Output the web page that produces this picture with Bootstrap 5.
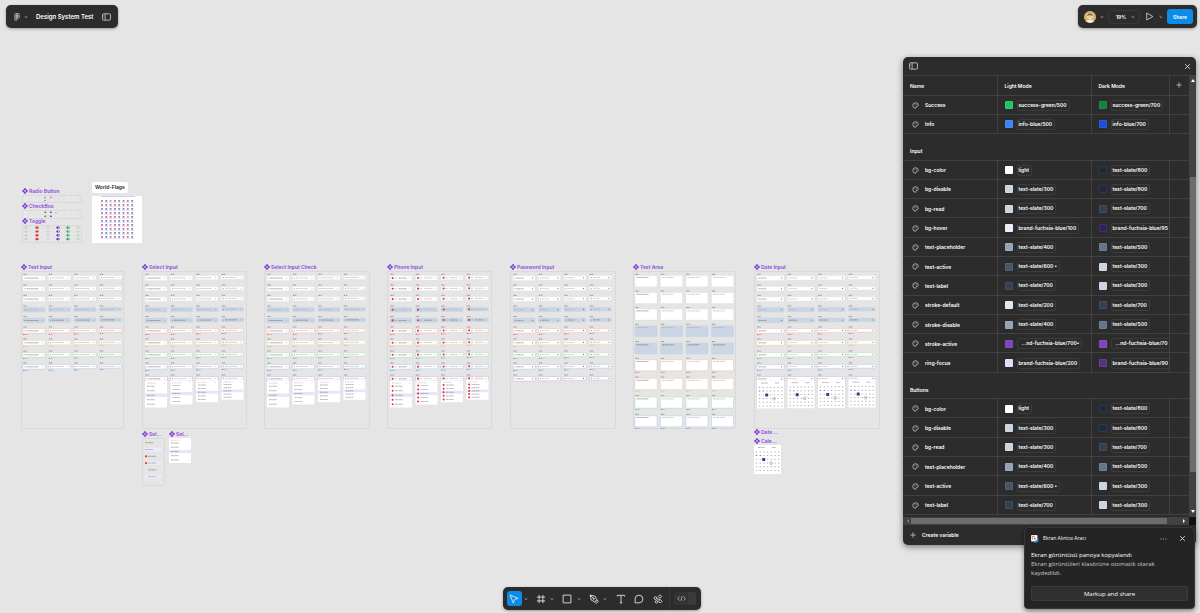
<!DOCTYPE html>
<html lang="en">
<head>
<meta charset="utf-8">
<meta name="viewport" content="width=device-width, initial-scale=1">
<title>Design System Test</title>
<link href="https://cdn.jsdelivr.net/npm/bootstrap@5.3.0/dist/css/bootstrap.min.css" rel="stylesheet">
<style>
  :root { --ui: #2c2c2c; --line: #414141; --purple: #8a4bdb; --accent: #0c8ce9; }
  body { background: #e5e5e5; font-family: Inter, sans-serif; font-size: 5px; line-height: 10px; font-weight: 600; color: #fff; }
  svg { display: block; flex: none; }
  button { font: inherit; color: inherit; background: none; border: 0; padding: 0; }
  .workspace { min-height: 100vh; }
  .floating { background: var(--ui); border-radius: 5px; box-shadow: 0 1px 3px #0005; }
  .topbar { padding: 5px 3px 0 6px; z-index: 2; }
  .topbar .floating { height: 23px; }
  .file-bar { padding: 0 7px 0 8px; width: 112px; }
  .file-name { font-weight: 600; font-size: 6px; margin: 0 auto 0 8px; }
  .user-bar { width: 119px; padding: 0 4px 0 6px; }
  .avatar { width: 12px; height: 12px; }
  .zoom-level { width: 32px; height: 14px; border: 1px solid #383838; border-radius: 3px; margin-left: 4px; padding: 0 4px 0 7px; }
  .present { gap: 5px; }
  .share { background: var(--accent); border-radius: 3px; width: 26px; height: 15px; }

  .art { position: absolute; margin: 0; }
  .art figcaption { position: absolute; left: 0; bottom: 100%; color: var(--purple); white-space: nowrap; display: flex; align-items: center; gap: 1px; line-height: 8px; }
  .art .chip { background: #fff; color: #222; border-radius: 2px; padding: 1px 3px; margin-bottom: 3px; line-height: 9px; }

  .variables { position: absolute; top: 57px; right: 4px; width: 293px; box-shadow: 0 2px 6px #0007; overflow: hidden; }
  .variables-head { height: 18px; padding: 0 5px 0 6px; }
  .grid-area { height: 442px; overflow: hidden; border-top: 1px solid var(--line); }
  .var-table { table-layout: fixed; width: 286px; height: 439px; border-collapse: collapse; }
  .var-table th, .var-table td { height: 19px; padding: 1px 0 0 7px; border-bottom: 1px solid var(--line); border-right: 1px solid var(--line); overflow: hidden; white-space: nowrap; vertical-align: middle; font-weight: 600; }
  .var-table tr > :last-child { border-right: 0; }
  .var-table .group-row th { height: 26px; padding-top: 9px; }
  .var-name { gap: 6px; padding-left: 2px; }
  .swatch { width: 8px; height: 8px; border-radius: 1px; border: 1px solid #ffffff12; flex: none; }
  .alias { border: 1px solid #3b3b3b; border-radius: 2px; line-height: 9px; padding: 0 2px 0 1px; margin-left: 4px; }
  .alias.cut { padding-left: 4px; }
  .vbar { width: 7px; background: #424242; padding: 4px 1px; }
  .vthumb { position: absolute; left: 1px; right: 0; top: 102px; height: 295px; background: #6c6c6c; }
  .hbar { height: 8px; background: #424242; }
  .hthumb { height: 6px; width: 256px; background: #6c6c6c; margin-left: 2px; }
  .corner { width: 7px; height: 8px; background: #111; }
  .create { height: 20px; padding-left: 7px; gap: 6px; }

  .notice { position: absolute; right: 5px; bottom: 4px; width: 171px; height: 82px; padding: 6px 6px 7px; background: #242424; border: 1px solid #363636; border-radius: 4px; box-shadow: 0 2px 5px #0007; font-family: "Open Sans", "Noto Sans", sans-serif; font-weight: 400; font-size: 6px; line-height: 9px; z-index: 3; }
  .notice-title { font-size: 5px; font-weight: 500; }
  .notice-icons { gap: 12px; padding-right: 2px; }
  .notice-text { margin: 8px 24px 0 0; color: #c8c8c8; }
  .notice-text strong { display: block; font-weight: 400; color: #fff; }
  .notice .markup { height: 15px; background: #303030; border: 1px solid #3b3b3b; border-radius: 2px; line-height: 12px; }

  .toolbar-wrap { position: absolute; left: 4px; right: 0; bottom: 3px; z-index: 2; pointer-events: none; }
  .tools { height: 23px; width: 198px; padding: 0 5px 0 4px; pointer-events: auto; }
  .tool { height: 15px; width: 15px; display: flex; align-items: center; justify-content: center; }
  .tool.current { background: var(--accent); border-radius: 3px; }
  .more { width: 8px; margin: 0 4px 0 0; display: flex; justify-content: center; }
  .dev { width: 22px; height: 13px; border-radius: 3px; background: linear-gradient(90deg, #333 65%, #3a3a3a 65%); padding-left: 3px; margin-left: 4px; display: flex; align-items: center; }
  .split { width: 1px; height: 23px; background: #383838; }
</style>
</head>
<body>
<svg class="d-none" aria-hidden="true">
  <symbol id="i-caret" viewBox="0 0 4 4"><path d="M.7 1.4 2 2.6 3.3 1.4" fill="none" stroke="#ccc" stroke-width=".7"/></symbol>
  <symbol id="i-panel" viewBox="0 0 8 7"><rect x=".5" y=".7" width="7" height="5.6" rx=".8" fill="none" stroke="#ddd" stroke-width=".7"/><path d="M2.8 .7v5.6M1.5 2.2h.5M1.5 3.4h.5" stroke="#ddd" stroke-width=".6"/></symbol>
  <symbol id="i-close" viewBox="0 0 6 6"><path d="m1 1 4 4m0-4L1 5" stroke="#eee" stroke-width=".7"/></symbol>
  <symbol id="i-plus" viewBox="0 0 6 6"><path d="M3 .4v5.2M.4 3h5.2" stroke="#ddd" stroke-width=".7"/></symbol>
  <symbol id="i-palette" viewBox="0 0 8 8"><path d="M4 .8A3.2 3.2 0 1 0 4.2 7.2C4.8 7 4.3 6 4.6 5.4 5 4.8 7.2 5.3 7.2 4A3.2 3.2 0 0 0 4 .8Z" fill="none" stroke="#ddd" stroke-width=".75"/><path d="M2.4 3.3h.6M3.7 2.3h.6M5.1 3h.6" stroke="#ddd" stroke-width=".7"/></symbol>
  <symbol id="i-comp" viewBox="0 0 6 6"><path d="M3 0 4.3 1.3 3 2.6 1.7 1.3ZM3 3.4 4.3 4.7 3 6 1.7 4.7ZM0 3 1.3 1.7 2.6 3 1.3 4.3ZM3.4 3 4.7 1.7 6 3 4.7 4.3Z" fill="#7a35d6" stroke="#7a35d6" stroke-width=".2"/></symbol>
</svg>

<div class="workspace position-relative overflow-hidden">
  <header class="topbar position-relative d-flex justify-content-between">
    <div class="floating file-bar d-flex align-items-center">
      <button aria-label="Main menu" class="d-flex align-items-center gap-1">
        <svg width="6" height="8" viewBox="0 0 6 8" fill="none" stroke="#ddd" stroke-width=".6"><path d="M3 .5H1.7a1.2 1.2 0 0 0 0 2.4H3ZM3 .5h1.3a1.2 1.2 0 0 1 0 2.4H3ZM3 2.9H1.7a1.2 1.2 0 0 0 0 2.4H3Z"/><circle cx="4.3" cy="4.1" r="1.2"/><path d="M3 5.3H1.7A1.2 1.2 0 1 0 3 6.5Z"/></svg>
        <svg width="4" height="4"><use href="#i-caret"/></svg>
      </button>
      <h1 class="file-name lh-1">Design System Test</h1>
      <button aria-label="Toggle sidebar"><svg width="9" height="8"><use href="#i-panel"/></svg></button>
    </div>
    <div class="floating user-bar d-flex align-items-center">
      <button class="d-flex align-items-center gap-1" aria-label="Account">
        <svg class="avatar" viewBox="0 0 12 12"><circle cx="6" cy="6" r="6" fill="#d9b36a"/><circle cx="6" cy="5.3" r="3" fill="#f0dfb8"/><path d="M3.5 4.5C4 2 8 2 8.5 4.5 7 3.8 5 3.8 3.5 4.5ZM4.5 6h1M6.5 6h1" fill="#8a6a35" stroke="#6b5230" stroke-width=".5"/><path d="M2.5 10.5C3 8 9 8 9.5 10.5A6 6 0 0 1 2.5 10.5Z" fill="#f7f0e2"/></svg>
        <svg width="4" height="4"><use href="#i-caret"/></svg>
      </button>
      <button class="zoom-level d-flex align-items-center justify-content-between">19% <svg width="4" height="4"><use href="#i-caret"/></svg></button>
      <button class="present d-flex align-items-center ms-auto me-1" aria-label="Present">
        <svg width="9" height="9" viewBox="0 0 8 8"><path d="M1.5 .9 7 4 1.5 7.1Z" fill="none" stroke="#ddd" stroke-width=".7" stroke-linejoin="round"/></svg>
        <svg width="4" height="4"><use href="#i-caret"/></svg>
      </button>
      <button class="share">Share</button>
    </div>
  </header>

  <main id="board" aria-label="Canvas"></main>

  <section class="variables floating" aria-label="Variables">
    <div class="variables-head d-flex align-items-center justify-content-between">
      <button aria-label="Show collections"><svg width="9" height="8"><use href="#i-panel"/></svg></button>
      <button aria-label="Close"><svg width="7" height="7"><use href="#i-close"/></svg></button>
    </div>
    <div class="d-flex">
      <div class="grid-area flex-grow-1">
        <table class="var-table">
          <colgroup><col width="94"><col width="94"><col width="78"><col width="20"></colgroup>
          <thead><tr><th scope="col">Name</th><th scope="col">Light Mode</th><th scope="col">Dark Mode</th><th scope="col" class="p-0"><button class="d-block mx-auto" aria-label="New mode"><svg width="6" height="6"><use href="#i-plus"/></svg></button></th></tr></thead>
          <tbody id="vars"></tbody>
        </table>
      </div>
      <div class="vbar position-relative d-flex flex-column justify-content-between align-items-center">
        <svg width="4" height="3" viewBox="0 0 4 3"><path d="M0 3 2 0 4 3Z" fill="#fff"/></svg>
        <div class="vthumb"></div>
        <svg width="4" height="3" viewBox="0 0 4 3"><path d="M0 0 2 3 4 0Z" fill="#fff"/></svg>
      </div>
    </div>
    <div class="d-flex">
      <div class="hbar flex-grow-1 d-flex align-items-center justify-content-between">
        <svg class="ms-1" width="2" height="4" viewBox="0 0 2 4"><path d="M2 0 0 2 2 4Z" fill="#888"/></svg>
        <div class="hthumb me-auto"></div>
        <svg class="me-1" width="2" height="4" viewBox="0 0 2 4"><path d="M0 0 2 2 0 4Z" fill="#fff"/></svg>
      </div>
      <div class="corner"></div>
    </div>
    <button class="create d-flex align-items-center"><svg width="6" height="6"><use href="#i-plus"/></svg>Create variable</button>
  </section>

  <aside class="notice d-flex flex-column" aria-label="Notification" lang="tr">
    <div class="d-flex align-items-center">
      <svg width="8" height="8" viewBox="0 0 8 8"><rect x="0" y="0" width="6.5" height="6.5" rx="1" fill="#f4f4f4"/><path d="M1.3 4.500V1.300H4" fill="none" stroke="#c94b32" stroke-width=".7"/><path d="M2.500 7.500 7.500 3.500V6L6 7.500Z" fill="#2f8fe0"/><circle cx="3.800" cy="3.600" r=".9" fill="#d2694c"/></svg>
      <span class="notice-title ms-1">Ekran Alıntısı Aracı</span>
      <div class="notice-icons d-flex align-items-center ms-auto">
        <button aria-label="Options"><svg width="7" height="6" viewBox="0 0 7 6"><path d="M.5 3h1M3 3h1M5.5 3h1" stroke="#ddd" stroke-width=".8"/></svg></button>
        <button aria-label="Dismiss"><svg width="7" height="7"><use href="#i-close"/></svg></button>
      </div>
    </div>
    <p class="notice-text"><strong>Ekran görüntüsü panoya kopyalandı</strong>Ekran görüntüleri klasörüne otomatik olarak kaydedildi.</p>
    <button class="markup mt-auto">Markup and share</button>
  </aside>

  <div class="toolbar-wrap d-flex justify-content-center">
    <nav class="floating tools d-flex align-items-center" aria-label="Tools" id="tools"></nav>
  </div>
</div>

<script>
  const caret = '<svg width="4" height="4"><use href="#i-caret"/></svg>';
  const toolIcons = [
    ['Move', '<path d="M1 1 8.2 3.9 5 5 3.9 8.2Z"/>', true],
    ['Frame', '<path d="M2.8 .8v7.4M6.2 .8v7.4M.8 2.8h7.4M.8 6.2h7.4"/>', true],
    ['Rectangle', '<rect x="1" y="1" width="7" height="7"/>', true],
    ['Pen', '<path d="M1 1 5.5 2 7 5 5 7 2 5.5ZM1 1 4 4M5.5 7.5 7.5 5.5 8.5 6.5 6.5 8.5Z"/><circle cx="4.3" cy="4.3" r=".6"/>', true],
    ['Text', '<path d="M1.2 2.3V1.2h6.6v1.1M4.5 1.2v6.8M3.4 8h2.2"/>', false],
    ['Comment', '<path d="M1 8V4.5A3.5 3.5 0 1 1 4.5 8Z"/>', false],
    ['Actions', '<path d="M6.3 .7 7.9 2.3 6.3 3.9 4.7 2.3ZM6.5 4.9 8.1 6.5 6.5 8.1 4.9 6.5Z"/><circle cx="2.2" cy="3.7" r="1.2"/><circle cx="3.1" cy="7" r="1.1"/><path d="M3.400 4.300 6 5"/>', false]
  ];
  tools.innerHTML = toolIcons.map(([name, path, more], i) =>
    `<button class="tool ${i ? '' : 'current'}" aria-label="${name}"><svg width="10" height="10" viewBox="0 0 9 9" fill="none" stroke="#eee" stroke-width=".75" stroke-linejoin="round">${path}</svg></button>` +
    (more ? `<button class="more" aria-label="${name} options">${caret}</button>` : '<span class="ps-1"></span>')).join('') +
    `<span class="split ms-auto"></span><button class="dev" aria-label="Dev mode"><svg width="9" height="7" viewBox="0 0 9 7"><path d="M2.5 1.5.7 3.5l1.8 2M6.5 1.5l1.8 2-1.8 2M5.2 1.2 3.8 5.8" fill="none" stroke="#ccc" stroke-width=".7"/></svg></button>`;

  const s = n => 'text-slate/' + n, b = n => 'brand-fuchsia-blue/' + n;
  const base = [
    ['bg-color', 'light', '#ffffff', s(800), '#1e293b'],
    ['bg-disable', s(300), '#cbd5e1', s(800), '#1e293b'],
    ['bg-read', s(300), '#cbd5e1', s(700), '#334155']];
  const mid = [
    ['text-placeholder', s(400), '#94a3b8', s(500), '#64748b'],
    ['text-active', s(600) + ' •', '#475569', s(300), '#cbd5e1'],
    ['text-label', s(700), '#334155', s(300), '#cbd5e1']];
  const rows = [
    ['Success', 'success-green/500', '#22c55e', 'success-green/700', '#15803d'],
    ['Info', 'info-blue/500', '#3b82f6', 'info-blue/700', '#1d4ed8'],
    'Input', ...base,
    ['bg-hover', b(100), '#f0eafc', b(95), '#35205c'], ...mid,
    ['stroke-default', s(200), '#e2e8f0', s(700), '#334155'],
    ['stroke-disable', s(400), '#94a3b8', s(500), '#64748b'],
    ['stroke-active', '...nd-fuchsia-blue/700•', '#7e45b8', '...nd-fuchsia-blue/70', '#7e45b8'],
    ['ring-focus', b(200), '#e2dcfa', b(90), '#56337e'],
    'Buttons', ...base, ...mid];
  const value = (t, c) => `<td><div class="d-flex align-items-center"><span class="swatch" style="background:${c}"></span><span class="alias ${t[0] === '.' ? 'cut' : ''}">${t}</span></div></td>`;
  vars.innerHTML = rows.map(r => typeof r === 'string'
    ? `<tr class="group-row"><th colspan="4" scope="rowgroup">${r}</th></tr>`
    : `<tr><th scope="row"><div class="var-name d-flex align-items-center"><svg width="7" height="7"><use href="#i-palette"/></svg>${r[0]}</div></th>${value(r[1], r[2])}${value(r[3], r[4])}<td></td></tr>`).join('');

  /* Component sheets on the canvas */
  const rect = (x, y, w, h, f, st = 'none', r = .5) => `<rect x="${x}" y="${y}" width="${w}" height="${h}" rx="${r}" fill="${f}" stroke="${st}" stroke-width=".35"/>`;
  const words = (x, y, w, c = '#777', o = .8) => `<path d="M${x} ${y}h${w}" stroke="${c}" stroke-width=".7" stroke-dasharray="2 .3 1.4 .4" opacity="${o * .85}"/>`;
  const dot = (x, y, r, c) => `<circle cx="${x}" cy="${y}" r="${r}" fill="${c}"/>`;
  const border = (w, h) => `<rect x=".5" y=".5" width="${w - 1}" height="${h - 1}" rx="1" fill="none" stroke="#c9c5cf" stroke-width=".6" stroke-dasharray="1 .5"/>`;
  const states = ['#e3e6ea', '#d5d8dd', '#d5d8dd', 'dis', 'read', '#f0a5a5', '#f0cf98', '#8fd6ab', '#94b6ef', '#b79ad6'];
  const status = ['#e02f2f', '#e8a13a', '#22a35a', '#3772dd'];

  function menu(x, y, h, phone) {
    let o = rect(x, y, 22, h, '#fff') + words(x + 2, y + 2.2, 9, '#999', .6) + dot(x + 19.5, y + 2, .4, '#999');
    const step = (h - 4) / 5;
    o += rect(x, y + 3.4 + step * 2, 22, step * .8, '#eae4fa', 'none', 0);
    for (let i = 0; i < 5; i++) {
      const yy = y + 3.4 + step * (i + .4);
      if (phone) o += dot(x + 2.6, yy, 1, '#d9304c');
      o += words(x + (phone ? 5 : 2), yy, 8, '#666', .8);
    }
    return o;
  }
  function calendar(x, y, w = 27, h = 28) {
    let o = rect(x, y, w, h, '#fff') + words(x + 4, y + 2.5, 7, '#666') + words(x + 18, y + 2.5, 4, '#666');
    for (let r = 0; r < 6; r++) for (let c = 0; c < 7; c++)
      o += rect(x + 1.8 + c * 3.7, y + 6.4 + r * 3.7, 1.5, 1, r === 1 && c < 2 ? '#8064a8' : '#7779');
    return o + rect(x + 8.2, y + 13, 3, 3, '#52308c') + rect(x + 15.8, y + 16.8, 2.6, 2.6, 'none', '#7a52b0');
  }
  function sheet(kind) {
    const date = kind === 'date', area = kind === 'area', phone = kind === 'phone';
    const w = date ? 27 : 22, pitch = date ? 30.5 : 25.5, left = kind === 'text' || kind === 'area' ? 2 : 3;
    const ys = area ? [3.3, 20, 36.6, 53.3, 70.5, 87.3, 106, 124.6, 143.3] : [3.3, 14, 24.3, 35, 45.6, 56, 68, 80, 92, 104];
    let o = '';
    ys.forEach((y, r) => {
      if (r === 9 && kind === 'text') return;
      for (let c = 0; c < 4; c++) {
        const x = left + c * pitch, h = area ? 11 : 4.6 - c * .35, st = states[r], flat = r === 3 || r === 4;
        o += words(x + .3, y, 3.5, '#555', .85) + rect(x, y + 1.5, w, h, flat ? '#cbd6e4' : '#fff', flat ? '#c2cfdf' : st);
        const ty = area ? y + 3.3 : y + 1.5 + h / 2, strong = r === 3 ? .35 : c === 0 || r === 4 ? .85 : .5;
        if (phone) o += dot(x + 2.6, ty, 1.05, '#d9304c') + words(x + 4.5, ty, 2, '#666', .6) + words(x + 8.5, ty, 8.5, '#555', strong);
        else if (area || date) o += words(x + 1.5, ty, area ? 12 : 8, '#555', strong);
        else o += dot(x + 2, ty, .5, '#777') + words(x + 3.5, ty, kind === 'pass' ? 7 : 12, '#555', strong);
        if (!area) o += dot(x + w - 2.5, ty, date || kind === 'pass' ? .6 : .4, '#777');
        if (r > 4 && r < 9) o += dot(x + .8, y + h + 3, .55, status[r - 5]) + words(x + 1.8, y + h + 3, 3, status[r - 5], .65);
        if (r === 9) {
          if (date) o += calendar(x, y + 5.5 - c * .3);
          else if (kind !== 'pass') o += menu(x, y + 6 - c * .4, [26.5, 24, 22, 20][c], phone);
        }
      }
    });
    return o;
  }
  function option() {
    let o = '';
    for (let i = 0; i < 6; i++) {
      const y = 4.7 + i * 6.8;
      if (i % 2) o += rect(2.5, y - 1.7, 17, 3.4, '#eeeafa');
      if (i === 2 || i === 3) o += dot(4, y, 1.1, '#df3030');
      o += words(i < 2 ? 3 : 6, y, 8.5, i % 2 ? '#8165b5' : '#555', .8);
    }
    return o;
  }
  function flags() {
    let o = rect(0, 0, 50, 47, '#fff');
    const cs = ['#b8344e', '#4d54a6', '#d46a6a', '#8a3f80', '#3e6faa', '#c23a3a'];
    o += words(9, .6, 34, '#7b61c9', .7);
    for (let r = 0; r < 10; r++) for (let c = 0; c < 8; c++) {
      const k = cs[(r * 5 + c * 7 + r * c) % 6];
      o += rect(9 + c * 4.3, 4.3 + r * 4, 2, 1.3, k) + `<path d="M${8.5 + c * 4.3} ${6.6 + r * 4}h3.2" stroke="#8a62cc" stroke-width=".35" opacity=".7"/>`;
    }
    return o;
  }
  const faint = y => [3, 12, 20, 45, 52].map(x => dot(x, y, .7, '#f5f5f5')).join('');
  const radio = () => faint(2) + faint(5) + dot(23, 2.5, .7, '#777') + dot(29, 2.5, .7, '#8a52d0') + dot(23, 5.5, .7, '#777') + dot(37, 5, .6, '#e9a3b0');
  const check = () => faint(2) + faint(6) + [1.5, 5.5].map(y => rect(22.5, y, 1.6, 1.6, '#666') + rect(28, y, 1.6, 1.6, '#5b2ca0')).join('') + dot(34, 3, .7, '#b9b');
  function toggle() {
    let o = '';
    for (let r = 0; r < 4; r++) {
      const y = 2.7 + r * 3.8;
      [[4, '#d8c8c8'], [15, '#e03636'], [26, '#d4d4d4'], [36, '#6130b5'], [46, '#22a35a'], [56, '#c9d6c9']].forEach(([x, c], i) => o += rect(x - 1.7, y - 1.1, 3.4, 2.2, c, 'none', 1.1) + (i === 3 || i === 4 ? dot(x + .7, y, .5, '#fff') : ''));
    }
    return o;
  }
  const marks = [
    ['Radio Button', 22, 195, 60, 8, radio], ['CheckBox', 22, 210, 60, 9, check], ['Toggle', 22, 225, 60, 18, toggle],
    ['World-Flags', 92, 196, 50, 47, flags, 'chip'],
    ['Text Input', 21, 271, 103, 158, () => sheet('text')], ['Select Input', 142, 271, 105, 158, () => sheet('select')],
    ['Select Input Check', 264, 271, 106, 158, () => sheet('select')], ['Phone Input', 387, 271, 105, 158, () => sheet('phone')],
    ['Password Input', 510, 271, 106, 158, () => sheet('pass')], ['Text Area', 633, 271, 103, 158, () => sheet('area')],
    ['Date Input', 754, 271, 126, 158, () => sheet('date')],
    ['Sel...', 142, 438, 23, 48, option], ['Sel...', 169, 438, 22, 25, () => menu(0, 0, 25, false), 'bare'],
    ['Date ...', 754, 436, 27, 1, () => '', 'bare'], ['Cale...', 754, 445, 27, 29, () => calendar(0, 0, 27, 29), 'bare']];
  board.innerHTML = marks.map(([name, x, y, w, h, draw, type]) =>
    `<figure class="art" style="left:${x}px;top:${y}px"><figcaption class="${type === 'chip' ? 'chip' : ''}">${type === 'chip' ? '' : '<svg width="6" height="6"><use href="#i-comp"/></svg>'}${name}</figcaption><svg width="${w}" height="${h}" viewBox="0 0 ${w} ${h}">${type ? '' : border(w, h)}${draw()}</svg></figure>`).join('');
</script>
<script src="https://cdn.jsdelivr.net/npm/bootstrap@5.3.0/dist/js/bootstrap.bundle.min.js"></script>
</body>
</html>
